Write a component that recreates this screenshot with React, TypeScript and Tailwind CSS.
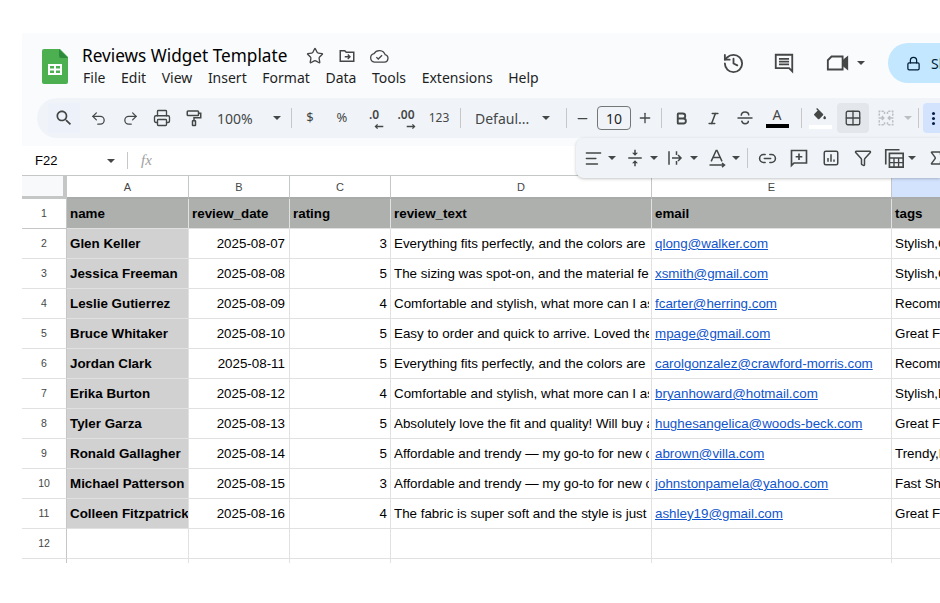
import {
  AlignLeft,
  Bold,
  Funnel,
  Grid2x2,
  History,
  Italic,
  Link2,
  Lock,
  Minus,
  Plus,
  Printer,
  Redo2,
  Sigma,
  Star,
  Undo2,
} from "lucide-react";
import type { ReactNode } from "react";

const rows = [
  ["Glen Keller", "2025-08-07", "3", "Everything fits perfectly, and the colors are vibrant.", "qlong@walker.com", "Stylish,Comfortable"],
  ["Jessica Freeman", "2025-08-08", "5", "The sizing was spot-on, and the material feels great.", "xsmith@gmail.com", "Stylish,Comfortable"],
  ["Leslie Gutierrez", "2025-08-09", "4", "Comfortable and stylish, what more can I ask for?", "fcarter@herring.com", "Recommended"],
  ["Bruce Whitaker", "2025-08-10", "5", "Easy to order and quick to arrive. Loved the packaging.", "mpage@gmail.com", "Great Fit"],
  ["Jordan Clark", "2025-08-11", "5", "Everything fits perfectly, and the colors are vibrant.", "carolgonzalez@crawford-morris.com", "Recommended"],
  ["Erika Burton", "2025-08-12", "4", "Comfortable and stylish, what more can I ask for?", "bryanhoward@hotmail.com", "Stylish,Fast"],
  ["Tyler Garza", "2025-08-13", "5", "Absolutely love the fit and quality! Will buy again.", "hughesangelica@woods-beck.com", "Great Fit"],
  ["Ronald Gallagher", "2025-08-14", "5", "Affordable and trendy — my go-to for new outfits.", "abrown@villa.com", "Trendy,Fast"],
  ["Michael Patterson", "2025-08-15", "3", "Affordable and trendy — my go-to for new outfits.", "johnstonpamela@yahoo.com", "Fast Shipping"],
  ["Colleen Fitzpatrick", "2025-08-16", "4", "The fabric is super soft and the style is just perfect.", "ashley19@gmail.com", "Great Fit"],
];

const menus = ["File", "Edit", "View", "Insert", "Format", "Data", "Tools", "Extensions", "Help"];
const colLetters = ["A", "B", "C", "D", "E"];
const gridCols = "grid grid-cols-[45px_122px_101px_101px_261px_240px_60px]";
const cellBase = "h-[30px] border-r border-b border-[#e1e1e1] overflow-hidden whitespace-nowrap flex items-center px-[3px] pt-px text-[13.37px]";

function Caret({ color = "border-t-[#444746]" }: { color?: string }) {
  return <span className={`block w-0 h-0 border-x-[4px] border-x-transparent border-t-[4px] ${color}`} />;
}

function Btn({ w = "w-[32px]", children }: { w?: string; children: ReactNode }) {
  return <div className={`${w} h-[30px] flex items-center justify-center shrink-0 text-[#444746]`}>{children}</div>;
}

function Divider({ ml }: { ml: string }) {
  return <div className={`${ml} w-px h-[20px] bg-[#c7c7c7] shrink-0`} />;
}

function SheetsLogo() {
  return (
    <svg width="26" height="35" viewBox="0 0 26 35" className="shrink-0">
      <path d="M2 0h16l8 8v25a2 2 0 0 1-2 2H2a2 2 0 0 1-2-2V2a2 2 0 0 1 2-2z" fill="#4caf50" />
      <path d="M17 0l9 9h-7a2 2 0 0 1-2-2z" fill="#2e8b3d" />
      <path d="M6 15h14v11H6z M8 17v2.5h4V17z M14 17v2.5h4V17z M8 21.5V24h4v-2.5z M14 21.5V24h4v-2.5z" fill="#fff" fillRule="evenodd" />
    </svg>
  );
}

function SearchIcon() {
  return (
    <svg width="20" height="20" viewBox="0 0 24 24" fill="#444746">
      <path d="M15.500 14h-.790l-.280-.270C15.410 12.590 16 11.110 16 9.500 16 5.910 13.090 3 9.500 3S3 5.910 3 9.500 5.910 16 9.500 16c1.610 0 3.090-.590 4.230-1.570l.270.280v.790l5 4.990L20.490 19l-4.990-5zm-6 0C7.010 14 5 11.990 5 9.500S7.010 5 9.500 5 14 7.010 14 9.500 11.990 14 9.500 14z" />
    </svg>
  );
}

function FolderMove() {
  return (
    <svg width="18" height="18" viewBox="0 0 24 24" fill="none" stroke="#444746" strokeWidth="2">
      <path d="M3 5h6l2 2h10v12H3z" />
      <path d="M9 13h7M13 10l3 3-3 3" strokeWidth="1.8" />
    </svg>
  );
}

function CloudCheck() {
  return (
    <svg width="20" height="18" viewBox="0 0 26 20" fill="none" stroke="#444746" strokeWidth="1.7">
      <path d="M7 18h13a5 5 0 0 0 1-9.8A8 8 0 0 0 6.5 7 5.6 5.6 0 0 0 7 18z" />
      <path d="M9.5 11.5l2.5 2.5 5-5" />
    </svg>
  );
}

function CommentLines() {
  return (
    <svg width="22" height="22" viewBox="0 0 24 24" fill="none" stroke="#444746" strokeWidth="2">
      <path d="M3 3h18v18l-3.500-3.500H3z" />
      <path d="M6.500 7.500h11M6.500 10.500h11M6.500 13.500h11" strokeWidth="1.700" />
    </svg>
  );
}

function VideoOutline() {
  return (
    <svg width="24" height="20" viewBox="0 0 26 20" fill="none" stroke="#444746" strokeWidth="2">
      <path d="M6 3h12v14H2V7z" />
      <path d="M18 8l5-4v12l-5-4" fill="#444746" />
    </svg>
  );
}

function Roller() {
  return (
    <svg width="18" height="18" viewBox="0 0 24 24" fill="none" stroke="#444746" strokeWidth="2">
      <rect x="3" y="2.500" width="15" height="6" rx="1" />
      <path d="M18 5.500h3v6H12v4" />
      <rect x="10" y="15.500" width="4" height="6.500" rx="0.500" />
    </svg>
  );
}

function StrikeIcon() {
  return (
    <svg width="18" height="18" viewBox="0 0 24 24" fill="none" stroke="#444746" strokeWidth="2">
      <path d="M2 12h20" />
      <path d="M7 9c0-3 2-5 5-5s5 2 5 4.500" />
      <path d="M7.500 15.500c.5 2.500 2 4 4.500 4s4.500-1.500 4.500-4" />
    </svg>
  );
}

function DecimalIcon({ label, dir }: { label: string; dir: "left" | "right" }) {
  return (
    <div className="relative w-[24px] h-[24px] flex justify-center font-['Noto_Sans'] text-[12px] font-semibold leading-[17px] text-[#444746]">
      {label}
      <svg width="10" height="7" viewBox="0 0 14 8" className="absolute bottom-0 right-[2px]" fill="none" stroke="#444746" strokeWidth="1.800">
        {dir === "left" ? <path d="M13 4H2M5 1L2 4l3 3" /> : <path d="M1 4h11M9 1l3 3-3 3" />}
      </svg>
    </div>
  );
}

function FillColor() {
  return (
    <div className="flex flex-col items-center">
      <svg width="16" height="16" viewBox="0 0 24 24" fill="#444746">
        <path d="M16.560 8.940 7.620 0 6.210 1.410l2.380 2.380-5.150 5.150a1.490 1.490 0 0 0 0 2.120l5.500 5.500c.290.290.680.440 1.060.440s.770-.150 1.060-.440l5.500-5.500c.590-.580.590-1.530 0-2.120zM19 11.500s-2 2.170-2 3.500a2 2 0 1 0 4 0c0-1.330-2-3.500-2-3.500z" />
      </svg>
      <div className="w-[23px] h-[4px] bg-white mt-[1px]" />
    </div>
  );
}

function MergeIcon() {
  return (
    <svg width="18" height="18" viewBox="0 0 24 24" fill="none" stroke="#bcbfc2" strokeWidth="2">
      <path d="M3 9V3h7v4M21 9V3h-7v4M3 15v6h7v-4M21 15v6h-7v-4" strokeDasharray="3 1.500" />
      <path d="M2 12h7M6.500 9.500 9 12l-2.500 2.500M22 12h-7M17.500 9.500 15 12l2.500 2.500" />
    </svg>
  );
}

function VAlignIcon() {
  return (
    <svg width="18" height="18" viewBox="0 0 24 24" fill="#444746">
      <path d="M3 11h18v2H3zM11 1v4H8l4 4 4-4h-3V1zM8 19h3v4h2v-4h3l-4-4z" />
    </svg>
  );
}

function WrapIcon() {
  return (
    <svg width="18" height="18" viewBox="0 0 24 24" fill="none" stroke="#444746" strokeWidth="2">
      <path d="M4 3v18M14 3v5M14 16v5M8 12h12M16 8l4 4-4 4" />
    </svg>
  );
}

function RotateIcon() {
  return (
    <svg width="20" height="20" viewBox="0 0 24 24" fill="none" stroke="#444746" strokeWidth="1.800">
      <path d="M5 16 11 3h1l6 13M7.500 11.500h9" />
      <path d="M3 20.500h17M18 18l3 2.500-3 2.500" />
    </svg>
  );
}

function CommentPlus() {
  return (
    <svg width="20" height="20" viewBox="0 0 24 24" fill="none" stroke="#444746" strokeWidth="2">
      <path d="M3 3h18v15H6l-3 3z" />
      <path d="M12 6.500v8M8 10.500h8" />
    </svg>
  );
}

function ChartIcon() {
  return (
    <svg width="18" height="18" viewBox="0 0 24 24" fill="none" stroke="#444746" strokeWidth="2">
      <rect x="3" y="3" width="18" height="18" rx="2" />
      <path d="M8 17v-5M12 17V7M16 17v-3" />
    </svg>
  );
}

function CalcIcon() {
  return (
    <svg width="22" height="22" viewBox="0 0 24 24" fill="none" stroke="#444746" strokeWidth="1.800">
      <path d="M3 19V3h15" />
      <path d="M7 7h15v15H7z" />
      <path d="M7 12h15M7 17h15M12 12v10M17 12v10" strokeWidth="1.500" />
    </svg>
  );
}

function FloatingToolbar() {
  return (
    <div className="absolute left-[554px] top-[105px] w-[364px] h-[40px] pl-[4px] bg-[#f0f4f9] rounded-l-lg shadow-[0_1px_3px_rgba(60,64,67,0.3)] flex items-center overflow-hidden">
      <div className="w-[26px] shrink-0 flex justify-center text-[#444746]"><AlignLeft size={19} strokeWidth={1.800} /></div>
      <div className="w-[12px] shrink-0 flex justify-center"><Caret /></div>
      <div className="w-[26px] shrink-0 ml-[4px] flex justify-center"><VAlignIcon /></div>
      <div className="w-[12px] shrink-0 flex justify-center"><Caret /></div>
      <div className="w-[26px] shrink-0 ml-[2px] flex justify-center"><WrapIcon /></div>
      <div className="w-[12px] shrink-0 flex justify-center"><Caret /></div>
      <div className="w-[26px] shrink-0 ml-[4px] flex justify-center"><RotateIcon /></div>
      <div className="w-[12px] shrink-0 flex justify-center"><Caret /></div>
      <Divider ml="ml-[5px]" />
      <Btn w="w-[32px] ml-[3px]"><Link2 size={19} strokeWidth={2} /></Btn>
      <Btn><CommentPlus /></Btn>
      <Btn><ChartIcon /></Btn>
      <Btn><Funnel size={18} strokeWidth={2} /></Btn>
      <Btn w="w-[30px]"><CalcIcon /></Btn>
      <div className="w-[6px] shrink-0 flex justify-center"><Caret /></div>
      <Btn w="w-[32px] ml-[5px]"><Sigma size={18} strokeWidth={2} /></Btn>
    </div>
  );
}

export default function App() {
  return (
    <div className="w-[940px] h-[603px] overflow-hidden bg-white pt-[33px] pl-[22px] font-['Liberation_Sans',sans-serif] text-black">
      <div className="relative w-[918px]">
        {/* title bar */}
        <header className="h-[113px] bg-[#f9fbfd] pt-[15px] pl-[20px] flex flex-col">
          <div className="h-[50px] flex items-start">
            <div className="pt-px"><SheetsLogo /></div>
            <div className="ml-[14px] -mt-[2px] flex flex-col">
              <div className="flex items-center h-[20px]">
                <span className="w-[205px] text-[17.2px] leading-[20px] text-black font-['Noto_Sans'] whitespace-nowrap">Reviews Widget Template</span>
                <Star size={18} strokeWidth={1.800} className="ml-[19px] text-[#444746]" />
                <div className="ml-[14px]"><FolderMove /></div>
                <div className="ml-[13px]"><CloudCheck /></div>
              </div>
              <nav className="flex gap-[15.600px] mt-[2px] pl-px text-[14px] leading-[20px] text-[#1f1f1f] font-['Noto_Sans']">
                {menus.map((m) => (
                  <span key={m}>{m}</span>
                ))}
              </nav>
            </div>
            <div className="ml-auto -mt-[5px] flex items-center h-[40px]">
              <History size={23} strokeWidth={1.900} className="text-[#444746]" />
              <div className="ml-[28px]"><CommentLines /></div>
              <div className="ml-[31px]"><VideoOutline /></div>
              <div className="ml-[7px] mr-[23px]"><Caret /></div>
              <div className="w-[52px] h-[40px] bg-[#c2e7ff] rounded-l-full flex items-center pl-[18px] overflow-hidden text-[14px] text-[#001d35] font-['Noto_Sans']">
                <Lock size={15} strokeWidth={2} className="shrink-0" />
                <span className="ml-[10px]">Share</span>
              </div>
            </div>
          </div>
        </header>

        {/* main toolbar, sits on top of the header bottom */}
        <div className="absolute left-[15px] top-[65px] w-[903px] h-[40px] rounded-l-full bg-[#f0f4f9] pl-[11px] flex items-center overflow-hidden">
          <Btn w="w-[32px] mr-[2px] bg-[#edf2fa]"><SearchIcon /></Btn>
          <Btn><Undo2 size={17} strokeWidth={1.800} /></Btn>
          <Btn><Redo2 size={17} strokeWidth={1.800} /></Btn>
          <Btn><Printer size={18} strokeWidth={1.800} /></Btn>
          <Btn><Roller /></Btn>
          <div className="w-[76px] pl-[7px] flex items-center text-[14px] text-[#444746] font-['Noto_Sans'] shrink-0">
            <span className="w-[56px]">100%</span>
            <Caret />
          </div>
          <Divider ml="ml-[5px]" />
          <Btn w="w-[32px] ml-[2px] font-['Noto_Sans'] text-[13px]">$</Btn>
          <Btn w="w-[32px] font-['Noto_Sans'] text-[13px]">%</Btn>
          <Btn><DecimalIcon label=".0" dir="left" /></Btn>
          <Btn><DecimalIcon label=".00" dir="right" /></Btn>
          <Btn w="w-[34px] text-[12px] font-['Noto_Sans']">123</Btn>
          <Divider ml="ml-[4px]" />
          <div className="w-[94px] pl-[14px] flex items-center text-[14px] text-[#444746] font-['Noto_Sans'] whitespace-nowrap shrink-0">
            <span className="w-[67px]">Defaul...</span>
            <Caret />
          </div>
          <Divider ml="ml-[11px]" />
          <Btn w="w-[30px]"><Minus size={15} strokeWidth={2} /></Btn>
          <div className="w-[34px] h-[24px] shrink-0 border border-[#747775] rounded flex items-center justify-center text-[14px] text-[#1f1f1f] font-['Noto_Sans']">10</div>
          <Btn w="w-[28px]"><Plus size={16} strokeWidth={2} /></Btn>
          <Divider ml="ml-[2px]" />
          <Btn w="w-[32px] ml-[3px]"><Bold size={15} strokeWidth={3} /></Btn>
          <Btn><Italic size={15} strokeWidth={2.500} /></Btn>
          <Btn><StrikeIcon /></Btn>
          <Btn>
            <div className="flex flex-col items-center leading-none text-[14px] font-['Noto_Sans']">
              A
              <div className="w-[23px] h-[4px] bg-black mt-[2px]" />
            </div>
          </Btn>
          <Divider ml="ml-[8px]" />
          <Btn w="w-[32px] ml-[2px]"><FillColor /></Btn>
          <div className="ml-[1px] w-[32px] h-[30px] rounded bg-[#e3e6ea] flex items-center justify-center text-[#444746] shrink-0">
            <Grid2x2 size={18} strokeWidth={1.800} />
          </div>
          <Btn w="w-[32px] ml-[1px]"><MergeIcon /></Btn>
          <div className="w-[12px] shrink-0 flex justify-center"><Caret color="border-t-[#bcbfc2]" /></div>
          <Divider ml="ml-[4px]" />
          <div className="ml-[4px] w-[20px] h-[30px] rounded-l bg-[#d3e3fd] flex flex-col items-center justify-center gap-[2px] shrink-0">
            <span className="w-[3px] h-[3px] rounded-full bg-[#041e49]" />
            <span className="w-[3px] h-[3px] rounded-full bg-[#041e49]" />
            <span className="w-[3px] h-[3px] rounded-full bg-[#041e49]" />
          </div>
        </div>

        {/* formula bar */}
        <div className="h-[30px] bg-white border-b border-[#c4c7c5] flex items-center">
          <span className="w-[85px] pl-[13px] text-[13px]">F22</span>
          <Caret />
          <div className="ml-[12px] w-px h-[17px] bg-[#c7c7c7]" />
          <span className="ml-[13px] text-[15px] italic text-[#a0a0a0] font-['Liberation_Serif']">fx</span>
        </div>

        <FloatingToolbar />

        {/* sheet */}
        <div>
          <div className={`${gridCols} h-[23px]`}>
            <div className="border-r-[4px] border-b-[3px] border-[#c4c7c5] bg-[#f8f9fa]" />
            {colLetters.map((l) => (
              <div key={l} className="border-r border-b-2 border-r-[#c4c7c5] border-b-[#a8abaa] flex items-center justify-center text-[11px] text-[#444746] pt-px">
                {l}
              </div>
            ))}
            <div className="bg-[#d3e3fd] border-b-2 border-b-[#a8abaa]" />
          </div>
          <div className={`${gridCols} h-[30px]`}>
            <div className="border-r border-b border-[#c4c7c5] flex items-center justify-center text-[10.500px] text-[#444746]">1</div>
            {["name", "review_date", "rating", "review_text", "email", "tags"].map((h) => (
              <div key={h} className={`${cellBase} bg-[#aeb0ae] font-bold border-[#999b99]`}>{h}</div>
            ))}
          </div>
          {rows.map((r, i) => (
            <div key={r[0]} className={gridCols}>
              <div className="h-[30px] border-r border-b border-r-[#c4c7c5] border-b-[#e1e1e1] flex items-center justify-center text-[10.500px] text-[#444746]">{i + 2}</div>
              <div className={`${cellBase} bg-[#d1d1d1] font-bold border-[#c4c7c5]`}>{r[0]}</div>
              <div className={`${cellBase} justify-end pr-[4px]`}>{r[1]}</div>
              <div className={`${cellBase} justify-end`}>{r[2]}</div>
              <div className={`${cellBase} pr-[2px]`}>
                <span className="block min-w-0 overflow-hidden">{r[3]}</span>
              </div>
              <div className={`${cellBase} text-[#1155cc] underline`}>{r[4]}</div>
              <div className={cellBase}>{r[5]}</div>
            </div>
          ))}
          <div className={gridCols}>
            <div className="h-[30px] border-r border-b border-r-[#c4c7c5] border-b-[#e1e1e1] flex items-center justify-center text-[10.500px] text-[#444746]">12</div>
            {[0, 1, 2, 3, 4, 5].map((c) => (
              <div key={c} className={cellBase} />
            ))}
          </div>
          <div className={`${gridCols} h-[4px]`}>
            <div className="border-r border-[#c4c7c5]" />
            {[0, 1, 2, 3, 4, 5].map((c) => (
              <div key={c} className="border-r border-[#e1e1e1]" />
            ))}
          </div>
        </div>
      </div>
    </div>
  );
}
